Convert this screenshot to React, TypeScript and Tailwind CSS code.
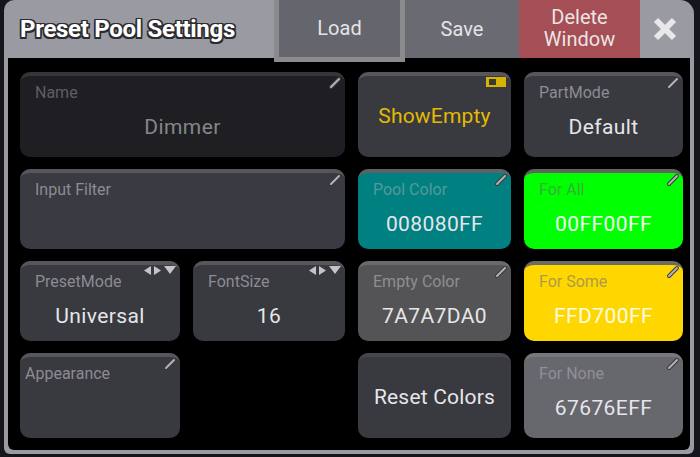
import React from "react";

type IconKind = "pencil" | "arrows" | "toggle" | "none";

interface CellProps {
  label?: string;
  value?: string;
  bg: string;
  strip: string;
  labelClass?: string;
  valueClass?: string;
  icon?: IconKind;
  className?: string;
  labelPad?: string;
  centered?: boolean;
}

const Pencil = () => (
  <svg width="14" height="14" viewBox="0 0 14 14" className="absolute top-[0px] right-[3px]">
    <line x1="3" y1="11" x2="11" y2="3" stroke="#3a3a3e" strokeWidth="4" strokeLinecap="round" />
    <line x1="3" y1="11" x2="11" y2="3" stroke="#b4b4b8" strokeWidth="2" strokeLinecap="round" />
  </svg>
);

const Arrows = () => (
  <svg width="34" height="11" viewBox="0 0 34 11" className="absolute top-[0px] right-[3px]">
    <polygon points="1,5.5 8,1 8,10" fill="#c4c4c8" />
    <polygon points="18,5.5 11,1 11,10" fill="#c4c4c8" />
    <polygon points="21,1 33,1 27,9" fill="#c4c4c8" />
  </svg>
);

const Toggle = () => (
  <svg width="20" height="10" viewBox="0 0 20 10" className="absolute top-[1px] right-[5px]">
    <rect x="0" y="0" width="20" height="10" fill="#d6b400" />
    <rect x="3" y="2" width="7" height="6" fill="#3b3a30" />
  </svg>
);

const Cell = (props: CellProps) => {
  const { label, value, bg, strip, labelClass, valueClass, icon = "pencil", className, labelPad, centered } = props;
  return (
    <div className={`relative rounded-[10px] border-t-[4px] ${bg} ${strip} ${className ?? ""} flex flex-col`}>
      {icon === "pencil" && <Pencil />}
      {icon === "arrows" && <Arrows />}
      {icon === "toggle" && <Toggle />}
      {centered ? (
        <div className={`flex-1 flex items-center justify-center text-[21px] tracking-[0.2px] ${valueClass ?? "text-[#e6e6e8]"}`}>{value}</div>
      ) : (
        <>
          <div className={`${labelPad ?? "pl-[15px]"} pt-[7px] text-[16px] leading-[20px] ${labelClass ?? "text-[#8c8c91]"}`}>{label}</div>
          {value && (
            <div className={`mt-[11px] text-center text-[21px] leading-[26px] tracking-[0.4px] ${valueClass ?? "text-[#e6e6e8]"}`}>{value}</div>
          )}
        </>
      )}
    </div>
  );
};

export default function App() {
  return (
    <div className="w-[700px] h-[457px] bg-[#15161c] font-['Roboto',sans-serif] overflow-hidden">
      <div className="ml-[4px] w-[690px] h-[454px] bg-[#9a9aa2] rounded-tl-[10px] rounded-tr-[14px] rounded-b-[6px] flex flex-col">
        <div className="flex h-[58px] shrink-0">
          <div className="w-[270px] pl-[16px] flex items-center text-[24px] tracking-[-0.3px] font-bold text-white [text-shadow:-1.5px_-1.5px_0_#2c2c30,1.5px_-1.5px_0_#2c2c30,-1.5px_1.5px_0_#2c2c30,1.5px_1.5px_0_#2c2c30,0_1.5px_0_#2c2c30,0_-1.5px_0_#2c2c30,1.5px_0_0_#2c2c30,-1.5px_0_0_#2c2c30]">
            Preset Pool Settings
          </div>
          <div className="relative z-10 w-[131px] h-[62px] bg-[#65656d] border-[5px] border-t-0 border-[#8b8b8d] flex items-center justify-center text-[20px] text-[#e4e4e6] pb-[2px]">
            Load
          </div>
          <div className="w-[114px] bg-[#6a6a72] flex items-center justify-center text-[20px] text-[#e4e4e6]">Save</div>
          <div className="w-[121px] bg-[#a54e55] flex items-center justify-center text-center text-[20px] leading-[22px] text-[#ece4e4] pb-[2px]">
            Delete
            <br />
            Window
          </div>
          <div className="flex-1 flex items-center justify-center pr-[4px]">
            <svg width="26" height="26" viewBox="0 0 26 26">
              <line x1="4" y1="4" x2="22" y2="22" stroke="#e8e8ea" strokeWidth="6" />
              <line x1="22" y1="4" x2="4" y2="22" stroke="#e8e8ea" strokeWidth="6" />
            </svg>
          </div>
        </div>
        <div className="flex-1 mx-[4px] mb-[4px] bg-black rounded-b-[6px] pt-[14px] pl-[12px]">
          <div className="grid grid-cols-[160px_152px_153px_159px] grid-rows-[85px_80px_80px_85px] gap-x-[13px] gap-y-[12px]">
            <Cell
              className="col-span-2"
              label="Name"
              value="Dimmer"
              bg="bg-[#1f1f23]"
              strip="border-[#36363a]"
              labelClass="text-[#5e5e63]"
              valueClass="text-[#86868a]"
            />
            <Cell bg="bg-[#393940]" strip="border-[#56565c]" icon="toggle" centered value="ShowEmpty" valueClass="text-[#e4bb00]" />
            <Cell label="PartMode" value="Default" bg="bg-[#393940]" strip="border-[#56565c]" />

            <Cell className="col-span-2" label="Input Filter" bg="bg-[#3a3a42]" strip="border-[#56565c]" />
            <Cell label="Pool Color" value="008080FF" bg="bg-[#008080]" strip="border-[#5e6264]" labelClass="text-[#55999a]" />
            <Cell label="For All" value="00FF00FF" bg="bg-[#00ff00]" strip="border-[#606460]" labelClass="text-[#38b038]" valueClass="text-[#f4fff4]" />

            <Cell label="PresetMode" value="Universal" bg="bg-[#393940]" strip="border-[#56565c]" icon="arrows" />
            <Cell label="FontSize" value="16" bg="bg-[#393940]" strip="border-[#56565c]" icon="arrows" />
            <Cell label="Empty Color" value="7A7A7DA0" bg="bg-[#545457]" strip="border-[#6a6a6e]" labelClass="text-[#8e8e92]" />
            <Cell label="For Some" value="FFD700FF" bg="bg-[#ffd700]" strip="border-[#6a6a66]" labelClass="text-[#b09a48]" valueClass="text-[#fffbe8]" />

            <Cell label="Appearance" bg="bg-[#393940]" strip="border-[#56565c]" labelPad="pl-[5px]" />
            <div />
            <Cell bg="bg-[#393940]" strip="border-[#46464c]" icon="none" centered value="Reset Colors" />
            <Cell label="For None" value="67676EFF" bg="bg-[#67676e]" strip="border-[#77777c]" labelClass="text-[#909096]" />
          </div>
        </div>
      </div>
    </div>
  );
}
